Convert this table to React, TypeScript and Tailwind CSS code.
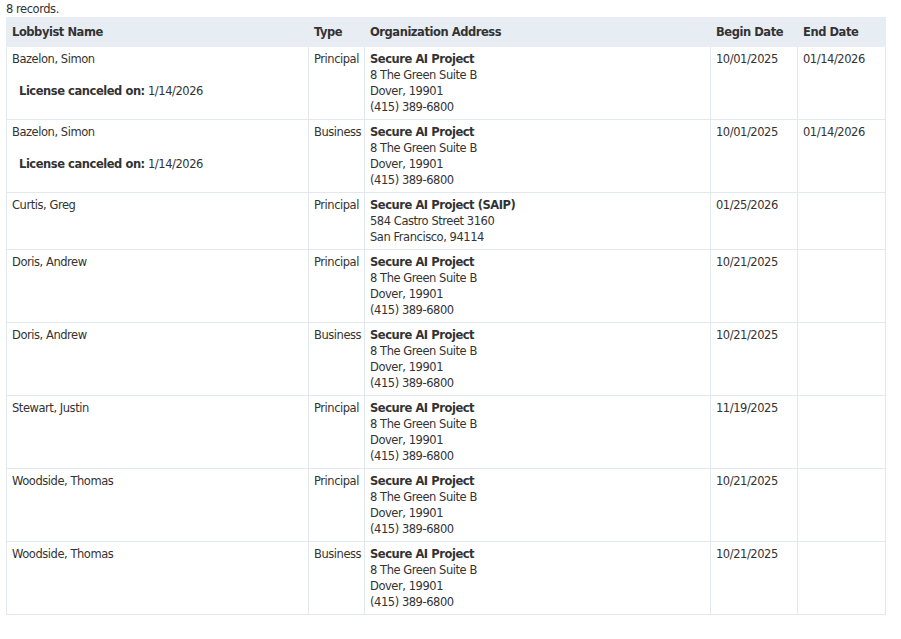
const FONT = "font-['DejaVu_Sans',Verdana,sans-serif]";

type Row = {
  name: string;
  canceled?: string;
  type: string;
  org: string;
  lines: string[];
  begin: string;
  end?: string;
};

const DOVER = ['8 The Green Suite B', 'Dover, 19901', '(415) 389-6800'];

const ROWS: Row[] = [
  { name: 'Bazelon, Simon', canceled: '1/14/2026', type: 'Principal', org: 'Secure AI Project', lines: DOVER, begin: '10/01/2025', end: '01/14/2026' },
  { name: 'Bazelon, Simon', canceled: '1/14/2026', type: 'Business', org: 'Secure AI Project', lines: DOVER, begin: '10/01/2025', end: '01/14/2026' },
  { name: 'Curtis, Greg', type: 'Principal', org: 'Secure AI Project (SAIP)', lines: ['584 Castro Street 3160', 'San Francisco, 94114'], begin: '01/25/2026' },
  { name: 'Doris, Andrew', type: 'Principal', org: 'Secure AI Project', lines: DOVER, begin: '10/21/2025' },
  { name: 'Doris, Andrew', type: 'Business', org: 'Secure AI Project', lines: DOVER, begin: '10/21/2025' },
  { name: 'Stewart, Justin', type: 'Principal', org: 'Secure AI Project', lines: DOVER, begin: '11/19/2025' },
  { name: 'Woodside, Thomas', type: 'Principal', org: 'Secure AI Project', lines: DOVER, begin: '10/21/2025' },
  { name: 'Woodside, Thomas', type: 'Business', org: 'Secure AI Project', lines: DOVER, begin: '10/21/2025' },
];

const cell = 'border border-[#e3e8ee] px-[5px] pt-[4px] pb-[4px] align-top';

export default function App() {
  return (
    <div className={`${FONT} min-h-screen bg-white px-[6px] pt-[1px] text-[11.5px] leading-[16px] text-[#333] tracking-[-0.45px]`}>
      <div>8 records.</div>
      <table className="w-[879px] table-fixed border-collapse">
        <colgroup>
          <col className="w-[302px]" />
          <col className="w-[56px]" />
          <col className="w-[346px]" />
          <col className="w-[87px]" />
          <col className="w-[88px]" />
        </colgroup>
        <thead>
          <tr className="bg-[#e8edf3] font-bold text-left">
            <th className="px-[5px] h-[29px] border border-[#e8edf3]">Lobbyist Name</th>
            <th className="px-[5px] h-[29px] border border-[#e8edf3]">Type</th>
            <th className="px-[5px] h-[29px] border border-[#e8edf3]">Organization Address</th>
            <th className="px-[5px] h-[29px] border border-[#e8edf3]">Begin Date</th>
            <th className="px-[5px] h-[29px] border border-[#e8edf3]">End Date</th>
          </tr>
        </thead>
        <tbody>
          {ROWS.map((r, i) => (
            <tr key={i}>
              <td className={cell}>
                <div>{r.name}</div>
                {r.canceled && (
                  <div className="mt-[16px] pl-[7px]">
                    <span className="font-bold">License canceled on:</span> {r.canceled}
                  </div>
                )}
              </td>
              <td className={cell}>{r.type}</td>
              <td className={cell}>
                <div className="font-bold">{r.org}</div>
                {r.lines.map((l) => (
                  <div key={l}>{l}</div>
                ))}
              </td>
              <td className={cell}>{r.begin}</td>
              <td className={cell}>{r.end}</td>
            </tr>
          ))}
        </tbody>
      </table>
    </div>
  );
}
